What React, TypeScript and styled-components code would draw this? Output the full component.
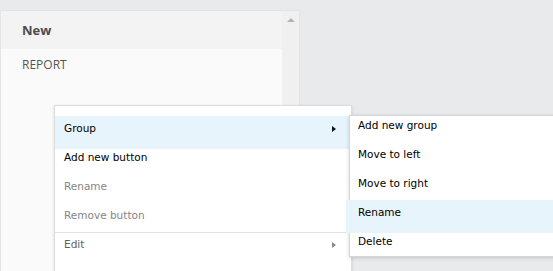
import styled, { createGlobalStyle } from 'styled-components'

const GlobalStyle = createGlobalStyle`
  html, body {
    margin: 0;
    padding: 0;
    background: #e9eaec;
    overflow: hidden;
  }
`

const Page = styled.div`
  position: relative;
  width: 553px;
  height: 271px;
  overflow: hidden;
  background: #e9eaec;
  padding: 11px 0 0 1px;
  box-sizing: border-box;
`

const Panel = styled.section`
  display: flex;
  width: 298px;
  height: 300px;
  background: #fafafa;
  box-shadow: 0 0 2px rgba(0, 0, 0, 0.08);
  font-family: "Open Sans", Arial, sans-serif;
  color: #555;
`

const PanelContent = styled.div`
  flex: 1;
  display: flex;
  flex-direction: column;
`

const PanelHeader = styled.header`
  display: flex;
  align-items: center;
  height: 38px;
  padding-left: 21px;
  background: #f3f3f3;
  font-size: 13px;
  font-weight: 700;
  color: #4c4c4c;
`

const PanelRow = styled.div`
  padding: 7px 21px;
  font-size: 12px;
  line-height: 18px;
`

const Scrollbar = styled.div`
  width: 17px;
  display: flex;
  justify-content: center;
  padding-top: 7px;
  background: #f0f0f0;
  box-sizing: border-box;
`

const UpArrow = styled.span`
  width: 0;
  height: 0;
  border-left: 4px solid transparent;
  border-right: 4px solid transparent;
  border-bottom: 4px solid #b4b4b4;
`

const Menu = styled.ul`
  position: absolute;
  left: 54px;
  top: 105px;
  width: 296px;
  height: 200px;
  margin: 0;
  padding: 14px 0 0;
  list-style: none;
  background: #fff;
  border: 1px solid #dcdcdc;
  box-shadow: 0 1px 3px rgba(0, 0, 0, 0.12);
  font-family: "DejaVu Sans", Verdana, sans-serif;
  font-size: 10.5px;
`

const SubMenu = styled.ul`
  position: absolute;
  left: 294px;
  top: 9px;
  width: 220px;
  margin: 0;
  padding: 1px 0 0;
  list-style: none;
  background: #fff;
  border: 1px solid #d6d6d6;
  box-shadow: 0 1px 4px rgba(0, 0, 0, 0.16);
  font-family: "DejaVu Sans", Verdana, sans-serif;
  font-size: 10.5px;
  z-index: 2;
`

const Item = styled.li<{ $active?: boolean; $disabled?: boolean; $muted?: boolean; $pad: number }>`
  display: flex;
  justify-content: space-between;
  align-items: flex-start;
  height: 17px;
  line-height: 17px;
  padding: 0 15px 12px ${p => p.$pad}px;
  color: ${p => (p.$disabled ? '#868686' : p.$muted ? '#606060' : '#000')};
  background: ${p => (p.$active ? '#e8f4fb' : 'transparent')};
  ${p => p.$active && `margin-top: -4px; padding-top: 4px;`}
`

const SubItem = styled(Item)`
  ${p => p.$active && `margin-left: -4px; padding-left: ${p.$pad + 4}px;`}
  &:last-child {
    padding-bottom: 6px;
  }
`

const SeparatedItem = styled(Item)`
  border-top: 1px solid #e2e2e2;
  margin-top: -4px;
  padding-top: 3px;
`

const Arrow = styled.span<{ $color: string }>`
  width: 0;
  height: 0;
  margin-top: 6px;
  border-top: 3px solid transparent;
  border-bottom: 3px solid transparent;
  border-left: 4px solid ${p => p.$color};
`

function App() {
  const subItems = ['Add new group', 'Move to left', 'Move to right', 'Rename', 'Delete']

  return (
    <Page>
      <GlobalStyle />
      <Panel>
        <PanelContent>
          <PanelHeader>New</PanelHeader>
          <PanelRow>REPORT</PanelRow>
        </PanelContent>
        <Scrollbar>
          <UpArrow />
        </Scrollbar>
      </Panel>
      <Menu>
        <Item $pad={9} $active>
          Group
          <Arrow $color="#111" />
        </Item>
        <Item $pad={9}>Add new button</Item>
        <Item $pad={9} $disabled>Rename</Item>
        <Item $pad={9} $disabled>Remove button</Item>
        <SeparatedItem $pad={9} $muted>
          Edit
          <Arrow $color="#8a8a8a" />
        </SeparatedItem>
        <SubMenu>
          {subItems.map(label => (
            <SubItem key={label} $pad={8} $active={label === 'Rename'}>
              {label}
            </SubItem>
          ))}
        </SubMenu>
      </Menu>
    </Page>
  )
}

export default App
